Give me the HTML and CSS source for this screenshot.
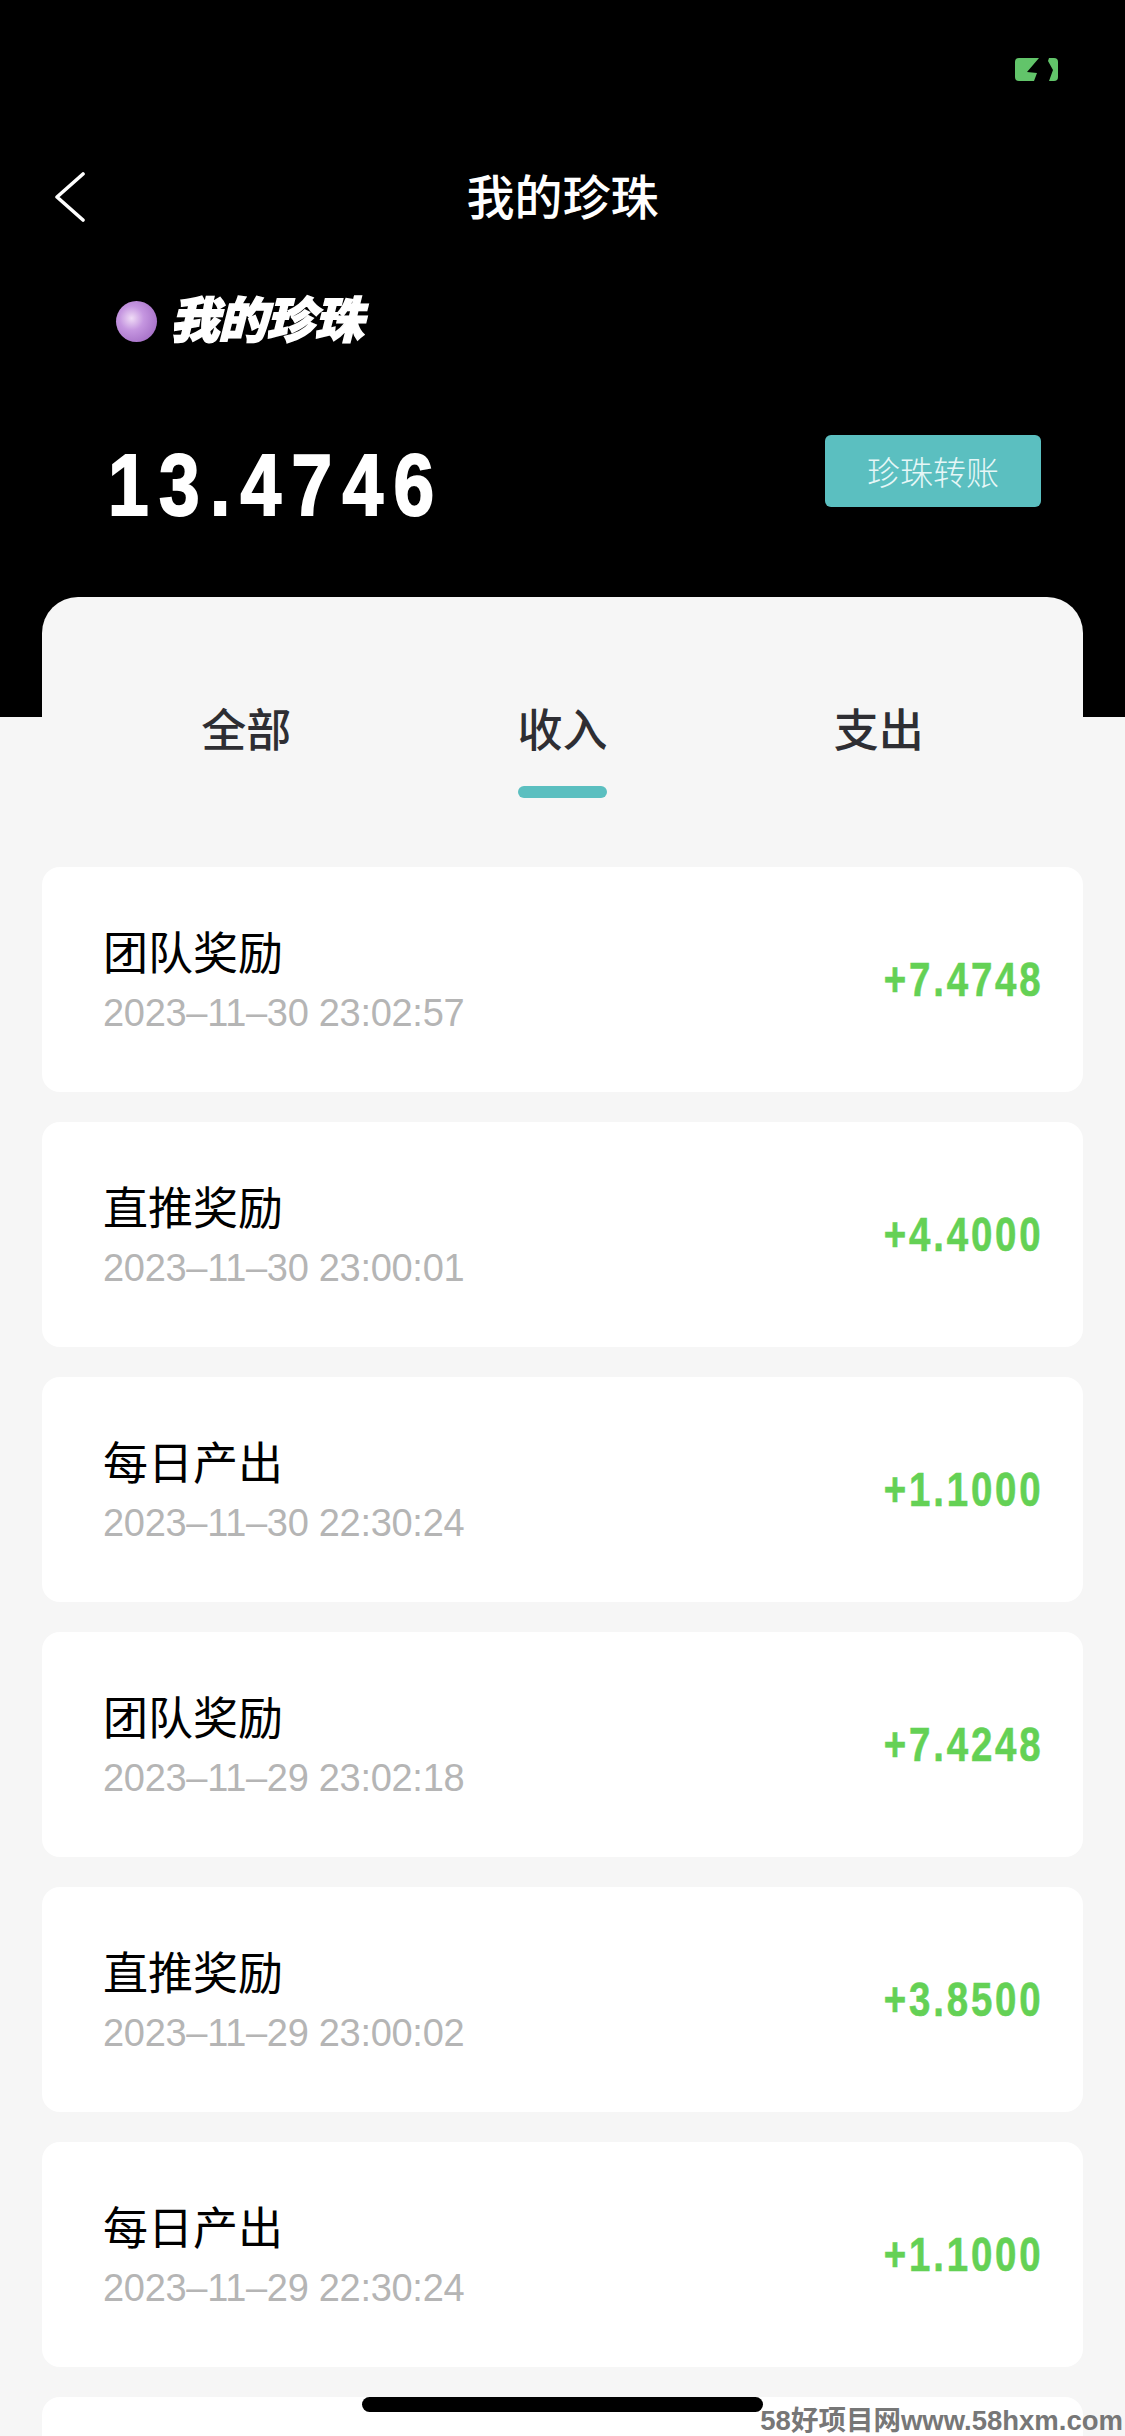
FILE: index.html
```html
<!DOCTYPE html>
<html lang="zh-CN">
<head>
  <meta charset="UTF-8" />
  <title>我的珍珠</title>
  <link rel="stylesheet" href="styles.css">
</head>
<body>
  <div class="page">
    <header class="header">
      <div class="status">
        <svg class="battery" width="43" height="23" viewBox="0 0 43 23">
          <rect width="43" height="23" rx="4" fill="#62c46a" />
          <path d="M24 0 L12 14 L22 15 L19 23 L34 23 L38 12 L33 3 L34 0 Z" fill="#000" />
        </svg>
      </div>
      <nav class="navbar">
        <svg class="back" width="30" height="50" viewBox="0 0 30 50">
          <path d="M28 2 L2 25 L28 48" fill="none" stroke="#fff" stroke-width="3.6" stroke-linecap="round" stroke-linejoin="round" />
        </svg>
        <h1>我的珍珠</h1>
        <span></span>
      </nav>
      <div class="brand">
        <span class="pearl"></span>
        <span class="brand-name">我的珍珠</span>
      </div>
      <div class="balance">
        <span class="balance-value">13.4746</span>
        <button class="transfer">珍珠转账</button>
      </div>
    </header>

    <main class="panel">
      <div class="tabs">
        <div class="tab">全部</div>
        <div class="tab active">收入</div>
        <div class="tab">支出</div>
      </div>

      <div class="list">
        <div class="card">
          <div>
            <div class="card-title">团队奖励</div>
            <div class="card-date">2023–11–30 23:02:57</div>
          </div>
          <div class="card-amount">+7.4748</div>
        </div>
        <div class="card">
          <div>
            <div class="card-title">直推奖励</div>
            <div class="card-date">2023–11–30 23:00:01</div>
          </div>
          <div class="card-amount">+4.4000</div>
        </div>
        <div class="card">
          <div>
            <div class="card-title">每日产出</div>
            <div class="card-date">2023–11–30 22:30:24</div>
          </div>
          <div class="card-amount">+1.1000</div>
        </div>
        <div class="card">
          <div>
            <div class="card-title">团队奖励</div>
            <div class="card-date">2023–11–29 23:02:18</div>
          </div>
          <div class="card-amount">+7.4248</div>
        </div>
        <div class="card">
          <div>
            <div class="card-title">直推奖励</div>
            <div class="card-date">2023–11–29 23:00:02</div>
          </div>
          <div class="card-amount">+3.8500</div>
        </div>
        <div class="card">
          <div>
            <div class="card-title">每日产出</div>
            <div class="card-date">2023–11–29 22:30:24</div>
          </div>
          <div class="card-amount">+1.1000</div>
        </div>
        <div class="card"></div>
      </div>
    </main>

    <div class="home-bar"></div>
    <div class="watermark">58好项目网www.58hxm.com</div>
  </div>
</body>
</html>
```

FILE: styles.css
```css
* {
  box-sizing: border-box;
}
body {
  margin: 0;
  background-color: #f6f6f6;
  font-family: "Liberation Sans", "Noto Sans CJK SC", sans-serif;
}
.page {
  position: relative;
  width: 1125px;
  height: 2436px;
  overflow: hidden;
  background-color: #f6f6f6;
}

/* black top area */
.header {
  height: 717px;
  background-color: #000;
  color: #fff;
}
.status {
  display: flex;
  justify-content: flex-end;
  height: 147px;
  padding: 58px 67px 0 0;
}
.navbar {
  display: grid;
  grid-template-columns: 1fr auto 1fr;
  align-items: center;
  height: 100px;
  padding: 0 55px;
}
.navbar h1 {
  margin: 3px 0 0;
  font-size: 48px;
  font-weight: 500;
  line-height: 97px;
}
.brand {
  display: flex;
  align-items: center;
  gap: 13px;
  height: 41px;
  margin-top: 54px;
  padding-left: 116px;
}
.pearl {
  width: 41px;
  height: 41px;
  border-radius: 50%;
  background: radial-gradient(circle at 38% 42%, #f0dcf6 0%, #c596e0 35%, #a873c9 75%, #8d5cb0 100%);
}
.brand-name {
  font-size: 49px;
  font-weight: 900;
  font-style: italic;
  letter-spacing: -1px;
  line-height: 41px;
  -webkit-text-stroke: 1.5px #fff;
}
.balance {
  display: flex;
  justify-content: space-between;
  align-items: center;
  height: 72px;
  margin-top: 93px;
  padding: 0 84px 0 108px;
}
/* no condensed bold installed, so the figures are squeezed sideways */
.balance-value {
  margin-top: 28px;
  font-size: 87px;
  font-weight: 700;
  letter-spacing: 12.3px;
  transform: scaleX(0.84);
  transform-origin: left center;
  -webkit-text-stroke: 2px #fff;
}
.transfer {
  width: 216px;
  height: 72px;
  padding: 0;
  border: none;
  border-radius: 6px;
  background-color: #5bbfc0;
  color: #e6f7f7;
  font-family: inherit;
  font-size: 33px;
  font-weight: 300;
}

/* tabs and records */
.panel {
  position: relative;
  margin: -120px 42px 0 42px;
  padding-top: 111px;
  border-radius: 36px 36px 0 0;
  background-color: #f6f6f6;
}
.tabs {
  display: grid;
  grid-template-columns: repeat(3, 1fr);
  padding: 0 46px;
}
.tab {
  position: relative;
  height: 48px;
  color: #2e2e33;
  font-size: 45px;
  font-weight: 500;
  line-height: 48px;
  text-align: center;
}
.tab.active::after {
  content: "";
  position: absolute;
  left: 50%;
  top: 78px;
  width: 89px;
  height: 12px;
  margin-left: -44px;
  border-radius: 6px;
  background-color: #5bbfc0;
}
.list {
  display: flex;
  flex-direction: column;
  gap: 30px;
  margin-top: 111px;
}
.card {
  display: flex;
  justify-content: space-between;
  align-items: center;
  height: 225px;
  padding: 0 43px 0 61px;
  border-radius: 18px;
  background-color: #fff;
}
.card-title {
  color: #000;
  font-size: 45px;
  line-height: 56px;
}
.card-date {
  margin-top: 10px;
  color: #b5b5b5;
  font-size: 38px;
  letter-spacing: -0.3px;
  line-height: 40px;
}
.card-amount {
  margin: 0 -3px 0 0;
  color: #64d155;
  font-size: 48px;
  font-weight: 700;
  letter-spacing: 3.5px;
  transform: scaleX(0.8);
  transform-origin: right center;
  -webkit-text-stroke: 0.6px #64d155;
}

/* things lying over the list */
.home-bar {
  position: absolute;
  left: 362px;
  top: 2397px;
  width: 401px;
  height: 15px;
  border-radius: 8px;
  background-color: #000;
}
.watermark {
  position: absolute;
  right: 2px;
  top: 2407px;
  color: #777;
  font-size: 27.5px;
  font-weight: 700;
  line-height: 27px;
  white-space: nowrap;
}
```
